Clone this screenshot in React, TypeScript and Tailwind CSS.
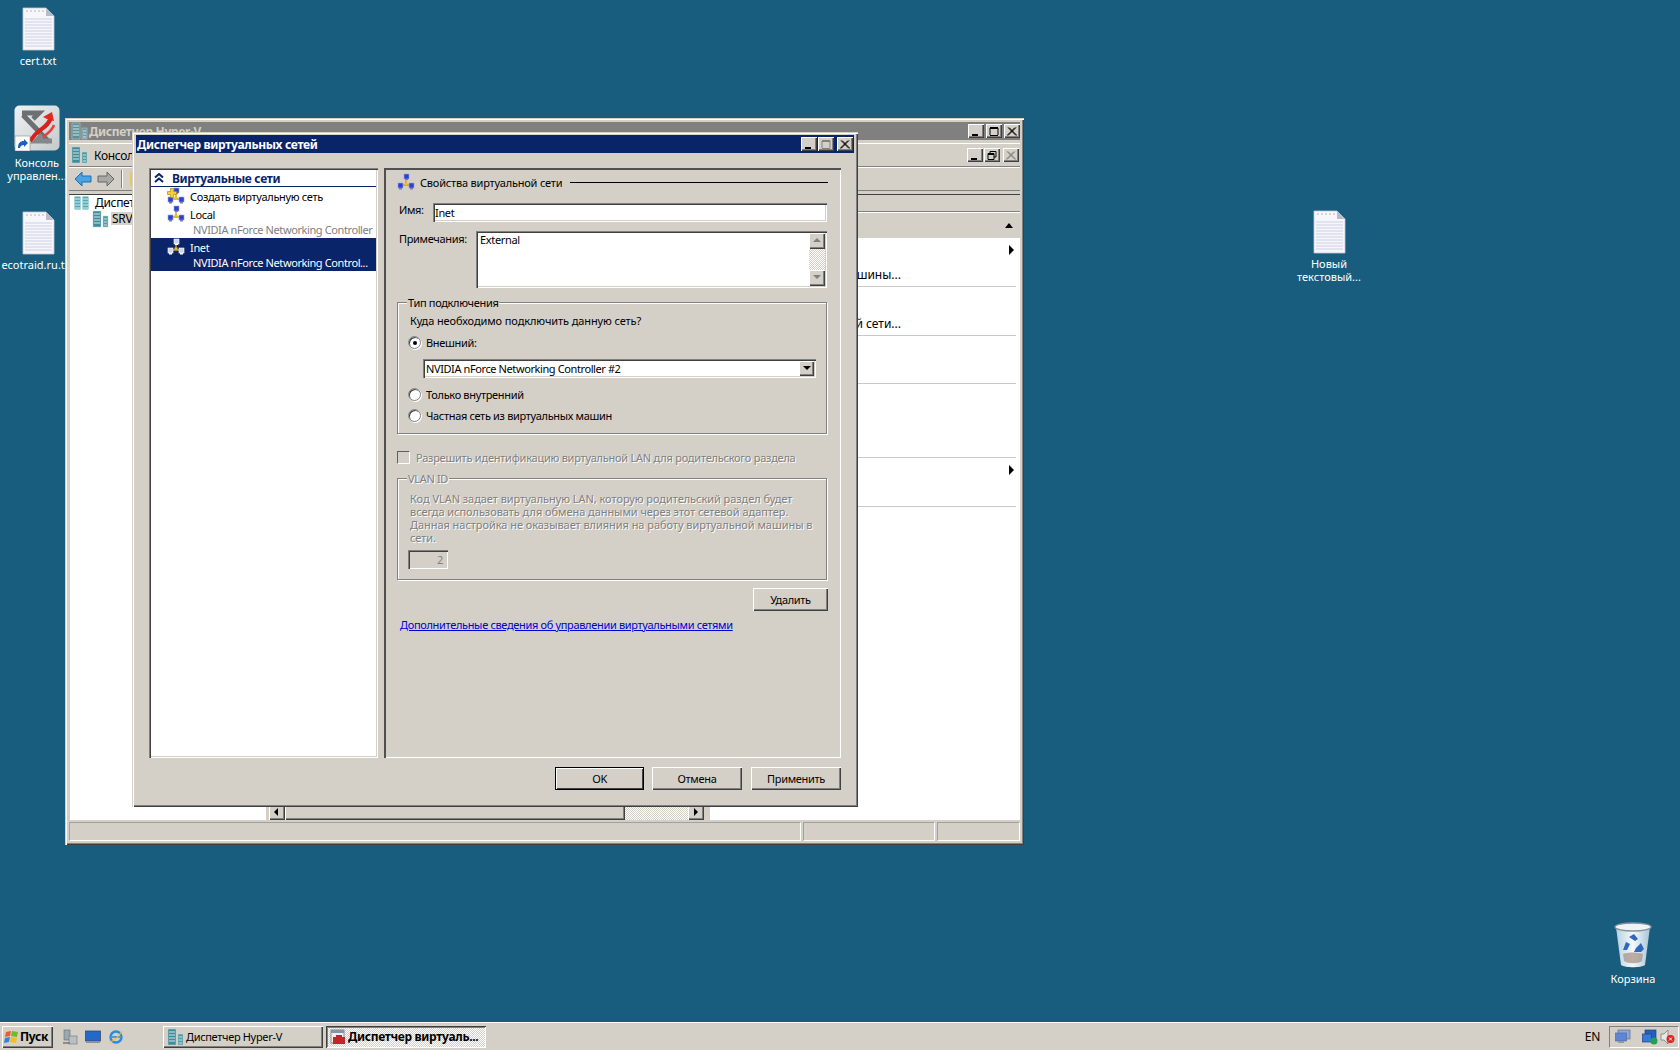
const outset = "shadow-[inset_1px_1px_0_#ffffff,inset_-1px_-1px_0_#404040,inset_-2px_-2px_0_#808080]";
const frame = "shadow-[inset_1px_1px_0_#d4d0c8,inset_2px_2px_0_#ffffff,inset_-1px_-1px_0_#404040,inset_-2px_-2px_0_#808080]";
const sunken = "shadow-[inset_1px_1px_0_#808080,inset_2px_2px_0_#404040,inset_-1px_-1px_0_#ffffff,inset_-2px_-2px_0_#d4d0c8]";
const etched = "border border-[#808080] shadow-[inset_1px_1px_0_#ffffff,1px_1px_0_#ffffff]";

const NetIcon = ({ add = false, light = false }: { add?: boolean; light?: boolean }) => {
  const screen = light ? "#c9d4f5" : "#2f3fd0";
  const base = light ? "#ffffff" : "#7a7f95";
  return (
    <svg width="18" height="18" viewBox="0 0 18 18" className="shrink-0">
      <path d="M9 6v4M4 12h10M9 10v2" stroke="#c8a010" strokeWidth="1.4" fill="none" />
      <rect x="7" y="1" width="5" height="5" fill={screen} stroke={light ? "#fff" : "#9aa4e0"} strokeWidth="0.6" />
      <rect x="8" y="6" width="3" height="1" fill={base} />
      <rect x="1" y="10" width="5" height="5" fill={screen} stroke={light ? "#fff" : "#9aa4e0"} strokeWidth="0.6" />
      <rect x="2" y="15" width="3" height="1.5" fill={base} />
      <rect x="12" y="10" width="5" height="5" fill={screen} stroke={light ? "#fff" : "#9aa4e0"} strokeWidth="0.6" />
      <rect x="13" y="15" width="3" height="1.5" fill={base} />
      <rect x="7.5" y="9.5" width="3" height="2.5" fill="#e8c020" />
      {add && <path d="M0.5 4.5h3v-3h3v3h3v3h-3v3h-3v-3h-3z" fill="#f4d030" stroke="#b08a10" strokeWidth="0.7" />}
    </svg>
  );
};

const ServerIcon = ({ muted = false }: { muted?: boolean }) => (
  <svg width="17" height="18" viewBox="0 0 17 18" className="shrink-0">
    <rect x="1" y="1" width="8" height="16" fill={muted ? "#5f8f98" : "#3f8c9a"} stroke="#b8d4d8" strokeWidth="0.5" />
    <path d="M2 4h6M2 7h6M2 10h6M2 13h6" stroke="#d4e8ea" strokeWidth="1" />
    <rect x="11" y="6" width="5" height="11" fill={muted ? "#6f99a0" : "#4f98a4"} stroke="#b8d4d8" strokeWidth="0.5" />
    <path d="M12 9h3M12 12h3M12 15h3" stroke="#d4e8ea" strokeWidth="1" />
  </svg>
);

const TreeRootIcon = () => (
  <svg width="15" height="14" viewBox="0 0 15 14" className="shrink-0">
    <rect x="0.5" y="0.5" width="6" height="13" fill="#55a9b4" />
    <rect x="8.5" y="0.5" width="6" height="13" fill="#55a9b4" />
    <path d="M1 3h5M1 6h5M1 9h5M1 12h5M9 3h5M9 6h5M9 9h5M9 12h5" stroke="#d8eef0" strokeWidth="1" />
  </svg>
);

const DocIcon = () => (
  <svg width="33" height="44" viewBox="0 0 33 44">
    <path d="M1 1h23l8 8v34H1z" fill="#f6f6fb" stroke="#c4c8d8" strokeWidth="0.8" />
    <path d="M24 1l8 8h-8z" fill="#b8bcc8" />
    <path d="M4 4h18" stroke="#b0b4c4" strokeWidth="1" strokeDasharray="2 2" />
    <path d="M3 12h27M3 15h27M3 18h27M3 21h27M3 24h27M3 27h27M3 30h27M3 33h27M3 36h27M3 39h27" stroke="#ccd0e4" strokeWidth="1" />
  </svg>
);

const ExchangeIcon = () => (
  <svg width="46" height="46" viewBox="0 0 46 46">
    <defs>
      <linearGradient id="tile" x1="0" y1="0" x2="1" y2="1">
        <stop offset="0" stopColor="#f0f2f2" />
        <stop offset="1" stopColor="#c4cacc" />
      </linearGradient>
    </defs>
    <rect x="0.5" y="0.5" width="45" height="45" rx="5" fill="url(#tile)" />
    <path d="M8 8h17l-6 6M9 10l26 27" stroke="#6c7072" strokeWidth="5" fill="none" />
    <path d="M38 36H22l6-6" stroke="#84888a" strokeWidth="5" fill="none" />
    <path d="M37 12c-2 10-12 12-17 19l-4 5" stroke="#d8201c" strokeWidth="4" fill="none" />
    <path d="M29 12l9-5 2 9-5-1z" fill="#e02a20" />
    <path d="M40 20c-2 6-7 9-11 12" stroke="#e8403a" strokeWidth="2.5" fill="none" />
    <rect x="1" y="31" width="15" height="15" fill="#ffffff" stroke="#888888" strokeWidth="0.6" />
    <path d="M4 43c0-5 2-7 6-7v-2l4 4-4 4v-2c-2 0-4 1-4 3z" fill="#1f5fc0" />
  </svg>
);

const BinIcon = () => (
  <svg width="38" height="48" viewBox="0 0 38 48">
    <defs>
      <linearGradient id="bin" x1="0" y1="0" x2="1" y2="0">
        <stop offset="0" stopColor="#b8d0e0" />
        <stop offset="0.5" stopColor="#f4f8fb" />
        <stop offset="1" stopColor="#a8c4d8" />
      </linearGradient>
    </defs>
    <path d="M2 6l5 38c4 3 20 3 24 0l5-38z" fill="url(#bin)" />
    <ellipse cx="19" cy="6" rx="18" ry="4" fill="#eef4f8" stroke="#8a9298" strokeWidth="1.4" />
    <path d="M10 40c4 3 14 3 18 0l1-7c-6-2-15-2-20 0z" fill="#a89488" opacity="0.75" />
    <path d="M15 16l5-3 4 5-3 2zM12 21l4 2-3 6h-4zM27 22l3 6-3 3h-7l2-4z" fill="#2f66c0" />
  </svg>
);

const FlagIcon = () => (
  <svg width="16" height="16" viewBox="0 0 16 16" className="shrink-0">
    <path d="M2 3l5-1-1 5-5 1z" fill="#e8602a" />
    <path d="M8 2l6 1-1 5-6-1z" fill="#76b82a" />
    <path d="M1 9l5-1-1 5-5 1z" fill="#3a7fd8" />
    <path d="M7 8l6 1-1 5-6-1z" fill="#f0c020" />
  </svg>
);

const WinBtn = ({ kind, disabled = false }: { kind: "min" | "max" | "restore" | "close"; disabled?: boolean }) => {
  const c = disabled ? "#808080" : "#000000";
  return (
    <div className={`w-[16px] h-[14px] bg-[#d4d0c8] flex items-center justify-center ${outset}`}>
      <svg width="10" height="9" viewBox="0 0 10 9">
        {kind === "min" && <rect x="1" y="7" width="6" height="2" fill={c} />}
        {kind === "max" && <path d="M1 0.5h8M1 1.5h8M1 8.5h8M1 1v7M9 1v7" stroke={c} strokeWidth="1" fill="none" />}
        {kind === "restore" && <path d="M3 2V0.5h6V6H7M1 3.5h6M1 2.5h6V8.5H1z" stroke={c} strokeWidth="1" fill="none" />}
        {kind === "close" && <path d="M1 0.5l8 8M2 0.5l8 8M9 0.5l-8 8M8 0.5l-8 8" stroke={c} strokeWidth="1" fill="none" />}
      </svg>
    </div>
  );
};

const ArrowBtn = ({ dir, disabled = false, w = 16, h = 16 }: { dir: "up" | "down" | "left" | "right"; disabled?: boolean; w?: number; h?: number }) => {
  const paths = { up: "M4 1L0 5h8z", down: "M0 1h8L4 5z", left: "M5 0v8L1 4z", right: "M2 0v8l4-4z" };
  return (
    <div style={{ width: w, height: h }} className={`shrink-0 bg-[#d4d0c8] flex items-center justify-center ${outset}`}>
      <svg width="8" height="8" viewBox="0 0 8 8">
        <path d={paths[dir]} fill={disabled ? "#808080" : "#000000"} />
      </svg>
    </div>
  );
};

const Radio = ({ checked = false }: { checked?: boolean }) => (
  <div className="w-[13px] h-[13px] rounded-full bg-white border border-[#808080] shadow-[inset_1px_1px_0_#404040,1px_1px_0_#ffffff] flex items-center justify-center shrink-0">
    {checked && <div className="w-[4px] h-[4px] rounded-full bg-black" />}
  </div>
);

const Button = ({ label, width, primary = false }: { label: string; width: string; primary?: boolean }) => (
  <div className={`${width} h-[23px] bg-[#d4d0c8] flex items-center justify-center text-black ${primary ? "border border-black shadow-[inset_1px_1px_0_#ffffff,inset_-1px_-1px_0_#404040]" : outset}`}>
    {label}
  </div>
);

const DesktopIcon = ({ label, className, children }: { label: string[]; className: string; children: React.ReactNode }) => (
  <div className={`absolute flex flex-col items-center w-[76px] text-white text-[11px] leading-[13px] tracking-normal ${className}`}>
    {children}
    <div className="mt-[3px] text-center whitespace-nowrap">
      {label.map((l) => (
        <div key={l}>{l}</div>
      ))}
    </div>
  </div>
);

const ActionRow = ({ height, text, arrow = false }: { height: string; text?: string; arrow?: boolean }) => (
  <div className={`${height} mx-[4px] border-b border-[#c8c8c8] flex flex-col`}>
    <div className="flex justify-end pr-[1px] pt-[7px] h-[24px]">
      {arrow && (
        <svg width="8" height="10" viewBox="0 0 8 10">
          <path d="M2 0v10l5-5z" fill="#000000" />
        </svg>
      )}
    </div>
    {text && (
      <div className="mt-auto mb-[4px] w-[187px] flex justify-end whitespace-nowrap text-[12px] leading-[14px] tracking-normal text-black">
        <span>{text}</span>
      </div>
    )}
  </div>
);

const HyperVWindow = () => (
  <div className={`absolute left-[65px] top-[118px] w-[959px] h-[727px] bg-[#d4d0c8] p-[4px] flex flex-col ${frame}`}>
    <div className="h-[18px] bg-[#808080] flex items-center pl-[2px] shrink-0">
      <ServerIcon muted />
      <span className="ml-[1px] font-bold text-[12px] text-[#d4d0c8]">Диспетчер Hyper-V</span>
      <div className="ml-auto flex items-center">
        <WinBtn kind="min" />
        <div className="ml-[2px]"><WinBtn kind="max" /></div>
        <div className="ml-[2px]"><WinBtn kind="close" /></div>
      </div>
    </div>
    <div className="mt-[3px] h-[24px] flex items-center pl-[2px] pr-[1px] shrink-0 border-t border-white border-b border-b-[#808080]">
      <ServerIcon />
      <span className="ml-[6px] text-[12px] text-black">Консоль</span>
      <div className="ml-auto flex items-center gap-[1px]">
        <WinBtn kind="min" />
        <WinBtn kind="restore" />
        <div className="ml-[2px]"><WinBtn kind="close" disabled /></div>
      </div>
    </div>
    <div className="h-[24px] flex items-center pl-[5px] shrink-0 border-t border-white border-b border-b-[#808080]">
      <svg width="18" height="16" viewBox="0 0 18 16">
        <path d="M1 8l7-7v4h9v6H8v4z" fill="#4aa4e4" stroke="#1f6fb0" strokeWidth="1" />
      </svg>
      <svg width="18" height="16" viewBox="0 0 18 16" className="ml-[5px]">
        <path d="M17 8l-7-7v4H1v6h9v4z" fill="#a8a8a8" stroke="#666666" strokeWidth="1" />
      </svg>
      <div className="ml-[6px] w-[2px] h-[18px] border-l border-[#808080] border-r border-r-white" />
      <div className="ml-[7px] w-[8px] h-[14px] bg-[#e8c860]" />
    </div>
    <div className="mt-[3px] flex-1 flex min-h-0 border-t border-[#404040]">
      <div className="w-[196px] ml-[1px] bg-white pl-[4px] shrink-0">
        <div className="flex items-center h-[15px]">
          <TreeRootIcon />
          <span className="ml-[6px] text-[12px] text-black">Диспетчер Hyper-V</span>
        </div>
        <div className="flex items-center h-[17px] pl-[18px]">
          <ServerIcon />
          <span className="ml-[2px] px-[1px] bg-[#d4d0c8] text-[12px] text-black">SRV</span>
        </div>
      </div>
      <div className="w-[3px] shrink-0" />
      <div className="flex-1 flex flex-col justify-end bg-white">
        <div className="h-[16px] flex">
          <ArrowBtn dir="left" />
          <div className={`w-[340px] bg-[#d4d0c8] ${outset}`} />
          <div className="flex-1 bg-[image:repeating-conic-gradient(#d4d0c8_0_25%,#ffffff_0_50%)] bg-[length:2px_2px]" />
          <ArrowBtn dir="right" />
        </div>
      </div>
      <div className="w-[6px] shrink-0" />
      <div className="w-[310px] shrink-0 bg-white flex flex-col">
        <div className="h-[17px] bg-[#d4d0c8] border-b border-[#808080] shrink-0" />
        <div className="h-[26px] bg-[#d4d0c8] border-t border-white shrink-0 flex items-center justify-end pr-[6px]">
          <svg width="10" height="8" viewBox="0 0 10 8">
            <path d="M5 1l4 5H1z" fill="#000000" />
          </svg>
        </div>
        <ActionRow height="h-[49px]" text="Параметры виртуальной машины..." arrow />
        <ActionRow height="h-[49px]" text="Диспетчер виртуальной сети..." />
        <ActionRow height="h-[48px]" />
        <ActionRow height="h-[74px]" />
        <ActionRow height="h-[49px]" arrow />
      </div>
    </div>
    <div className="mt-[2px] h-[19px] flex gap-[2px] shrink-0">
      <div className="w-[732px] border border-[#a0a0a0] border-r-white border-b-white" />
      <div className="w-[132px] border border-[#a0a0a0] border-r-white border-b-white" />
      <div className="flex-1 border border-[#a0a0a0] border-r-white border-b-white" />
    </div>
  </div>
);

const SidebarItem = ({ title, sub, add = false, selected = false }: { title: string; sub?: string; add?: boolean; selected?: boolean }) => (
  <div className={`w-full ${selected ? "bg-[#0a246a] text-white" : "text-black"} ${sub ? "h-[33px]" : "h-[18px]"}`}>
    <div className="flex items-center h-[18px] pl-[16px]">
      <NetIcon add={add} light={selected} />
      <span className="ml-[5px]">{title}</span>
    </div>
    {sub && <div className={`pl-[42px] h-[15px] leading-[13px] whitespace-nowrap tracking-[-0.4px] ${selected ? "text-white" : "text-[#808080]"}`}>{sub}</div>}
  </div>
);

const VirtualNetworkDialog = () => (
  <div className={`absolute left-[132px] top-[132px] w-[726px] h-[675px] bg-[#d4d0c8] p-[3px] flex flex-col text-[11px] leading-[13px] ${frame}`}>
    <div className="h-[18px] bg-[#0a246a] flex items-center pl-[1px] pr-[1px] shrink-0 mx-[1px]">
      <span className="font-bold text-[12px] text-white">Диспетчер виртуальных сетей</span>
      <div className="ml-auto flex items-center gap-[1px]">
        <WinBtn kind="min" />
        <WinBtn kind="max" disabled />
        <div className="ml-[2px]"><WinBtn kind="close" /></div>
      </div>
    </div>
    <div className="flex pl-[14px] pt-[15px] gap-[6px]">
      <div className={`w-[229px] h-[590px] bg-white p-[2px] ${sunken}`}>
        <div className="h-[17px] flex items-center border-b border-[#0a246a] pl-[3px]">
          <svg width="10" height="10" viewBox="0 0 10 10">
            <path d="M1 4.5l4-3.5 4 3.5M1 9l4-3.5 4 3.5" stroke="#0a246a" strokeWidth="2" fill="none" />
          </svg>
          <span className="ml-[8px] font-bold text-[#0a246a] text-[12px]">Виртуальные сети</span>
        </div>
        <SidebarItem title="Создать виртуальную сеть" add />
        <SidebarItem title="Local" sub="NVIDIA nForce Networking Controller" />
        <SidebarItem title="Inet" sub="NVIDIA nForce Networking Control..." selected />
      </div>
      <div className="w-[457px] h-[590px] pl-[13px] pt-[6px] border-t-2 border-l-2 border-t-[#505050] border-l-[#505050] shadow-[inset_-1px_-1px_0_#ffffff] text-black">
        <div className="-ml-[2px] -mt-[2px] w-[431px] flex flex-col">
          <div className="h-[16px] flex items-center">
            <NetIcon />
            <span className="ml-[5px] whitespace-nowrap tracking-[-0.2px]">Свойства виртуальной сети</span>
            <div className="ml-[8px] flex-1 h-px bg-black" />
          </div>
          <div className="mt-[13px] flex">
            <span className="ml-[2px] w-[34px]">Имя:</span>
            <div className={`ml-auto w-[394px] h-[19px] bg-white pl-[2px] pt-[3px] mr-[1px] ${sunken}`}>Inet</div>
          </div>
          <div className="mt-[9px] flex">
            <span className="ml-[2px] mt-[1px]">Примечания:</span>
            <div className={`ml-auto mr-[1px] w-[351px] h-[57px] bg-white flex justify-between p-[2px] ${sunken}`}>
              <span className="ml-[2px]">External</span>
              <div className="w-[16px] h-full flex flex-col bg-[image:repeating-conic-gradient(#d4d0c8_0_25%,#ffffff_0_50%)] bg-[length:2px_2px] justify-between">
                <ArrowBtn dir="up" disabled />
                <ArrowBtn dir="down" disabled />
              </div>
            </div>
          </div>
          <div className={`relative mt-[14px] w-[430px] h-[132px] pt-[11px] pl-[10px] ${etched}`}>
            <span className="absolute left-[9px] -top-[7px] px-[1px] bg-[#d4d0c8]">Тип подключения</span>
            <div className="pl-[2px] tracking-[-0.1px]">Куда необходимо подключить данную сеть?</div>
            <div className="mt-[9px] flex items-center h-[13px]">
              <Radio checked />
              <span className="ml-[5px]">Внешний:</span>
            </div>
            <div className={`mt-[10px] ml-[15px] w-[393px] h-[19px] bg-white flex items-center justify-between pl-[3px] pr-[2px] tracking-[-0.4px] ${sunken}`}>
              <span>NVIDIA nForce Networking Controller #2</span>
              <ArrowBtn dir="down" w={15} h={15} />
            </div>
            <div className="mt-[10px] flex items-center h-[13px]">
              <Radio />
              <span className="ml-[5px]">Только внутренний</span>
            </div>
            <div className="mt-[8px] flex items-center h-[13px]">
              <Radio />
              <span className="ml-[5px]">Частная сеть из виртуальных машин</span>
            </div>
          </div>
          <div className="mt-[17px] flex items-center h-[13px] text-[#808080] [text-shadow:1px_1px_0_#ffffff]">
            <div className="w-[13px] h-[13px] border border-[#808080] border-t-[#606060] border-l-[#606060] border-r-white border-b-white bg-[#d4d0c8] shrink-0" />
            <span className="ml-[6px] whitespace-nowrap tracking-[-0.24px]">Разрешить идентификацию виртуальной LAN для родительского раздела</span>
          </div>
          <div className={`relative mt-[14px] w-[430px] h-[102px] pt-[13px] pl-[10px] text-[#808080] ${etched}`}>
            <span className="absolute left-[9px] -top-[7px] px-[1px] bg-[#d4d0c8] [text-shadow:1px_1px_0_#ffffff]">VLAN ID</span>
            <div className="pl-[2px] whitespace-nowrap tracking-[-0.05px] [text-shadow:1px_1px_0_#ffffff]">
              <div>Код VLAN задает виртуальную LAN, которую родительский раздел будет</div>
              <div>всегда использовать для обмена данными через этот сетевой адаптер.</div>
              <div>Данная настройка не оказывает влияния на работу виртуальной машины в</div>
              <div>сети.</div>
            </div>
            <div className={`mt-[6px] w-[40px] h-[19px] text-right pr-[5px] pt-[3px] ${sunken}`}>2</div>
          </div>
          <div className="mt-[8px] flex justify-end">
            <Button label="Удалить" width="w-[75px]" />
          </div>
          <div className="mt-[7px] ml-[3px] text-[#0000d8] underline whitespace-nowrap">
            Дополнительные сведения об управлении виртуальными сетями
          </div>
        </div>
      </div>
    </div>
    <div className="mt-[9px] pr-[14px] flex justify-end text-black">
      <Button label="OK" width="w-[89px]" primary />
      <div className="ml-[8px]"><Button label="Отмена" width="w-[90px]" /></div>
      <div className="ml-[9px]"><Button label="Применить" width="w-[90px]" /></div>
    </div>
  </div>
);

const TaskButton = ({ label, active = false, children }: { label: string; active?: boolean; children: React.ReactNode }) => (
  <div
    className={`w-[160px] h-[22px] flex items-center pl-[4px] ${
      active
        ? "font-bold text-[12px] bg-[image:repeating-conic-gradient(#d4d0c8_0_25%,#ffffff_0_50%)] bg-[length:2px_2px] shadow-[inset_1px_1px_0_#404040,inset_-1px_-1px_0_#ffffff,inset_2px_2px_0_#808080]"
        : `text-[11px] bg-[#d4d0c8] ${outset}`
    }`}
  >
    {children}
    <span className="ml-[2px] whitespace-nowrap">{label}</span>
  </div>
);

const Taskbar = () => (
  <div className="h-[28px] bg-[#d4d0c8] border-t border-t-[#ffffff] shadow-[inset_0_1px_0_#d4d0c8] flex items-center pl-[2px] pr-[1px] shrink-0 text-black">
    <div className={`w-[51px] h-[22px] flex items-center pl-[2px] font-bold text-[12px] ${outset}`}>
      <FlagIcon />
      <span>Пуск</span>
    </div>
    <div className="ml-[9px] flex items-center gap-[7px]">
      <svg width="16" height="16" viewBox="0 0 16 16">
        <rect x="2" y="1" width="6" height="10" fill="#9aa8b0" stroke="#606a70" strokeWidth="0.6" />
        <rect x="7" y="7" width="8" height="8" fill="#b8c0c4" stroke="#6c7478" strokeWidth="0.6" />
        <path d="M1 14h7" stroke="#707070" strokeWidth="1.4" />
      </svg>
      <svg width="16" height="16" viewBox="0 0 16 16">
        <rect x="0.5" y="2" width="15" height="10" fill="#2468c8" stroke="#3a4a70" strokeWidth="0.8" />
        <rect x="1" y="12" width="14" height="2" fill="#8a92a0" />
      </svg>
      <svg width="16" height="16" viewBox="0 0 16 16">
        <circle cx="8" cy="8" r="5.5" fill="none" stroke="#2a8ae0" strokeWidth="2.4" />
        <path d="M4 8h8" stroke="#2a8ae0" strokeWidth="1.6" />
        <path d="M2 13c4-1 9-6 12-11" stroke="#f0c020" strokeWidth="1.2" fill="none" />
      </svg>
    </div>
    <div className="ml-[39px] flex items-center gap-[3px]">
      <TaskButton label="Диспетчер Hyper-V">
        <ServerIcon />
      </TaskButton>
      <TaskButton label="Диспетчер виртуаль..." active>
        <svg width="16" height="16" viewBox="0 0 16 16" className="shrink-0">
          <rect x="1" y="1" width="13" height="13" fill="#f0f0f0" stroke="#707070" strokeWidth="0.8" />
          <rect x="1" y="1" width="13" height="3" fill="#8a92a8" />
          <rect x="3" y="8" width="12" height="7" fill="#c82424" />
          <rect x="6" y="6" width="6" height="2" fill="#c82424" />
        </svg>
      </TaskButton>
    </div>
    <span className="ml-auto text-[12px]">EN</span>
    <div className="ml-[9px] w-[70px] h-[22px] flex items-center pl-[5px] border border-[#808080] border-r-white border-b-white">
      <svg width="16" height="16" viewBox="0 0 16 16">
        <rect x="3" y="1" width="12" height="9" fill="#8aa8e0" stroke="#5c6c90" strokeWidth="0.7" />
        <rect x="0.5" y="4" width="11" height="8" fill="#5e86d8" stroke="#5c6c90" strokeWidth="0.7" />
        <rect x="3" y="12" width="6" height="2" fill="#9098a8" />
      </svg>
      <svg width="16" height="16" viewBox="0 0 16 16" className="ml-[11px]">
        <rect x="3" y="1" width="11" height="9" fill="#2060c0" stroke="#204080" strokeWidth="0.7" />
        <rect x="0.5" y="5" width="9" height="8" fill="#3878d8" stroke="#204080" strokeWidth="0.7" />
        <circle cx="12" cy="12" r="3.5" fill="#22a050" />
      </svg>
      <svg width="15" height="16" viewBox="0 0 15 16" className="ml-[2px]">
        <path d="M1 5h3l4-4v14l-4-4H1z" fill="#e8e8e8" stroke="#707070" strokeWidth="0.7" />
        <circle cx="10.5" cy="10" r="4" fill="#e02020" />
        <path d="M9 8.5l3 3M12 8.5l-3 3" stroke="#ffffff" strokeWidth="1" />
      </svg>
    </div>
  </div>
);

export default function App() {
  return (
    <div className="w-[1680px] h-[1050px] flex flex-col overflow-hidden font-['Noto_Sans','Liberation_Sans',sans-serif] text-[11px] leading-[13px] tracking-[-0.33px]">
      <div className="relative flex-1 bg-[#185d7e]">
        <DesktopIcon label={["cert.txt"]} className="left-0 top-[7px]">
          <DocIcon />
        </DesktopIcon>
        <DesktopIcon label={["Консоль", "управлен..."]} className="-left-[1px] top-[105px]">
          <ExchangeIcon />
          <div className="h-[2px]" />
        </DesktopIcon>
        <DesktopIcon label={["ecotraid.ru.txt"]} className="left-0 top-[211px]">
          <DocIcon />
        </DesktopIcon>
        <DesktopIcon label={["Новый", "текстовый..."]} className="left-[1291px] top-[210px]">
          <DocIcon />
        </DesktopIcon>
        <DesktopIcon label={["Корзина"]} className="left-[1595px] top-[921px]">
          <BinIcon />
        </DesktopIcon>
        <HyperVWindow />
        <VirtualNetworkDialog />
      </div>
      <Taskbar />
    </div>
  );
}
